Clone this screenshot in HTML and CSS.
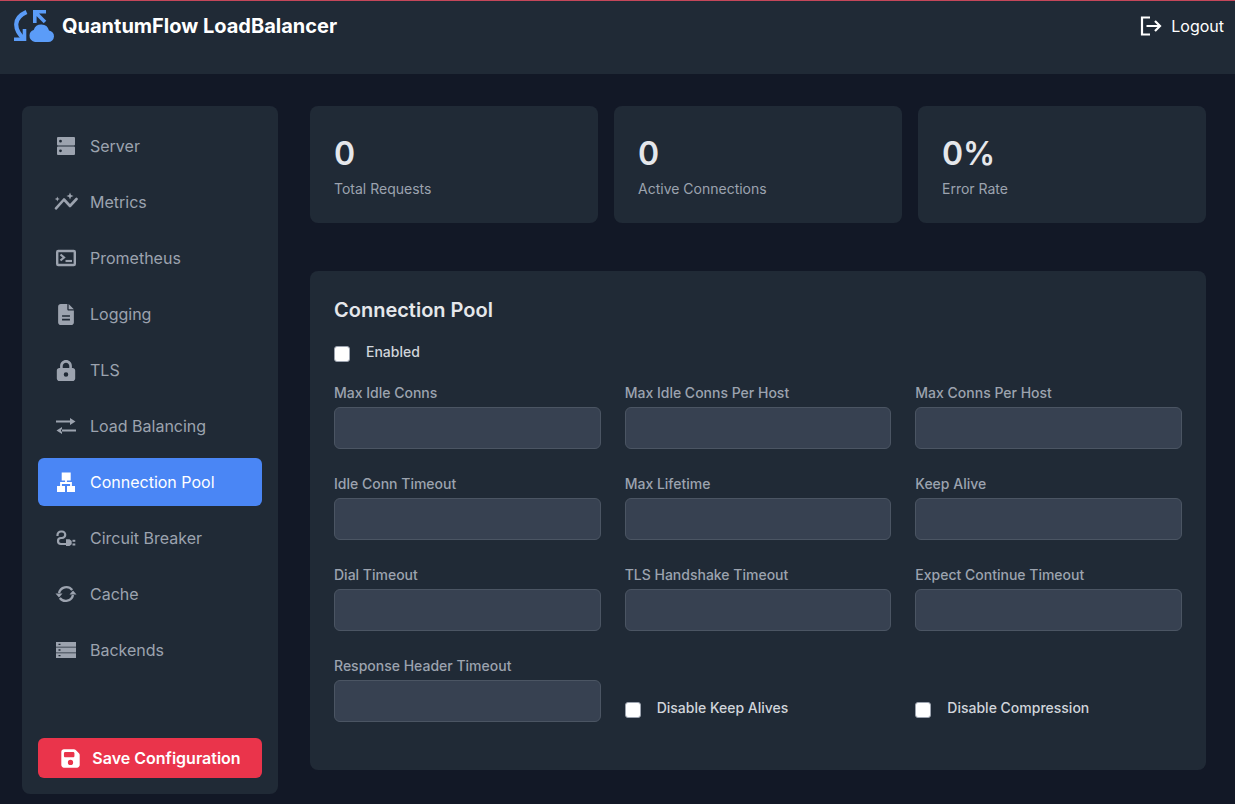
FILE: index.html
```html
<!DOCTYPE html>
<html lang="en">
<head>
    <meta charset="UTF-8">
    <meta name="viewport" content="width=device-width, initial-scale=1.0">
    <title>QuantumFlow LoadBalancer</title>
    <link rel="stylesheet" href="styles.css">
</head>
<body>
    <header class="topbar">
        <div class="brand">
            <svg class="brand-icon" viewBox="0 0 42 34" width="42" height="34">
                <path d="M12.500 3C-1 9 -.5 20 10 30" fill="none" stroke="#5b9cf8" stroke-width="4.200"/>
                <path d="M10.500 20V30.300H0" fill="none" stroke="#5b9cf8" stroke-width="3.600"/>
                <path d="M32 2.800H20.800V14M20.800 2.800L31 13" fill="none" stroke="#5b9cf8" stroke-width="3.600"/>
                <path d="M21 33A6.200 6.200 0 0 1 15.500 26.500A6 6 0 0 1 19.700 21A8 8 0 0 1 35 21.500A5.800 5.800 0 0 1 40 27.500A5.800 5.800 0 0 1 34.200 33Z" fill="#5b9cf8"/>
            </svg>
            <span class="brand-name">QuantumFlow LoadBalancer</span>
        </div>
        <a class="logout" href="#">
            <svg viewBox="0 0 22 20" width="22" height="20" fill="none" stroke="currentColor" stroke-width="2.200">
                <path d="M10 1.500H2V18.500H10"/>
                <path d="M6.500 10H20M15 5L20 10L15 15"/>
            </svg>
            <span>Logout</span>
        </a>
    </header>

    <div class="layout">
        <aside class="sidebar">
            <nav class="nav">
                <a class="nav-item" href="#">
                    <svg class="nav-icon" viewBox="0 0 20 20">
                        <path fill-rule="evenodd" d="M2 1H18A1 1 0 0 1 19 2V8.500A1 1 0 0 1 18 9.500H2A1 1 0 0 1 1 8.500V2A1 1 0 0 1 2 1ZM4.500 3.800A1.400 1.400 0 1 0 4.500 6.600A1.400 1.400 0 1 0 4.500 3.800ZM2 10.500H18A1 1 0 0 1 19 11.500V18A1 1 0 0 1 18 19H2A1 1 0 0 1 1 18V11.500A1 1 0 0 1 2 10.500ZM4.500 13.400A1.400 1.400 0 1 0 4.500 16.200A1.400 1.400 0 1 0 4.500 13.400Z"/>
                    </svg>
                    <span>Server</span>
                </a>
                <a class="nav-item" href="#">
                    <svg class="nav-icon nav-icon-wide" viewBox="0 0 24 20">
                        <path d="M2 16.300L10 7.500L16 14L22.500 7" fill="none" stroke="currentColor" stroke-width="2.600" stroke-linecap="round" stroke-linejoin="round"/>
                        <path d="M16 .5L17 3L19.500 4L17 5L16 7.500L15 5L12.500 4L15 3Z"/>
                        <path d="M3.300 4.500L4 6.300L5.800 7L4 7.700L3.300 9.500L2.600 7.700L.8 7L2.600 6.300Z"/>
                    </svg>
                    <span>Metrics</span>
                </a>
                <a class="nav-item" href="#">
                    <svg class="nav-icon nav-icon-wide" viewBox="0 0 24 20">
                        <rect x="3.200" y="3" width="17.600" height="14" rx="1" fill="none" stroke="currentColor" stroke-width="2.400"/>
                        <path d="M6.500 6.500L10 9.500L6.500 12.500" fill="none" stroke="currentColor" stroke-width="2.200"/>
                        <path d="M11.500 13H18" fill="none" stroke="currentColor" stroke-width="2.200"/>
                    </svg>
                    <span>Prometheus</span>
                </a>
                <a class="nav-item" href="#">
                    <svg class="nav-icon nav-icon-tall" viewBox="0 0 384 512">
                        <path fill-rule="evenodd" d="M64 0C28.700 0 0 28.700 0 64V448c0 35.300 28.700 64 64 64H320c35.300 0 64-28.700 64-64V160H256c-17.700 0-32-14.300-32-32V0H64zM256 0V128H384L256 0zM96 272H288V312H96zM96 360H288V400H96z"/>
                    </svg>
                    <span>Logging</span>
                </a>
                <a class="nav-item" href="#">
                    <svg class="nav-icon nav-icon-tall" viewBox="0 0 448 512">
                        <path fill-rule="evenodd" d="M144 144v48H304V144c0-44.200-35.800-80-80-80s-80 35.800-80 80zM80 192V144C80 64.500 144.500 0 224 0s144 64.500 144 144v48h16c35.300 0 64 28.700 64 64V448c0 35.300-28.700 64-64 64H64c-35.300 0-64-28.700-64-64V256c0-35.300 28.700-64 64-64H80zM224 297a55 55 0 1 0 0 110a55 55 0 1 0 0-110z"/>
                    </svg>
                    <span>TLS</span>
                </a>
                <a class="nav-item" href="#">
                    <svg class="nav-icon nav-icon-wide" viewBox="0 0 24 20">
                        <path d="M2 4.500H17V6.500H2ZM16 2L21.500 5.500L16 9Z"/>
                        <path d="M7 13.500H22V15.500H7ZM8 11L2.500 14.500L8 18Z"/>
                    </svg>
                    <span>Load Balancing</span>
                </a>
                <a class="nav-item active" href="#">
                    <svg class="nav-icon" viewBox="0 0 20 20">
                        <rect x="5.700" y=".5" width="9" height="8"/>
                        <path d="M10 8V12M5 14.500V11H15V14.500" fill="none" stroke="currentColor" stroke-width="1.800"/>
                        <rect x="1" y="14" width="8" height="6"/>
                        <rect x="11" y="14" width="8" height="6"/>
                    </svg>
                    <span>Connection Pool</span>
                </a>
                <a class="nav-item" href="#">
                    <svg class="nav-icon nav-icon-wide" viewBox="0 0 24 20">
                        <path d="M3.500 8V7A3.500 3.500 0 0 1 7 3.500H8A3.200 3.200 0 0 1 8 10H7A3 3 0 0 0 7 16H12" fill="none" stroke="currentColor" stroke-width="2.200"/>
                        <path d="M12 11.300H15.500L17.700 13V16.300L15.500 18H12Z"/>
                        <rect x="18.500" y="11.800" width="2.800" height="2"/>
                        <rect x="18.500" y="15.500" width="2.800" height="2"/>
                    </svg>
                    <span>Circuit Breaker</span>
                </a>
                <a class="nav-item" href="#">
                    <svg class="nav-icon nav-icon-wide" viewBox="0 0 24 20">
                        <path d="M5 9A7.500 7.500 0 0 1 18.200 6" fill="none" stroke="currentColor" stroke-width="2.400"/>
                        <path d="M19 11A7.500 7.500 0 0 1 5.800 14" fill="none" stroke="currentColor" stroke-width="2.400"/>
                        <path d="M1.500 9.500H8.500L5 13.500Z"/>
                        <path d="M22.500 10.500H15.500L19 6.500Z"/>
                    </svg>
                    <span>Cache</span>
                </a>
                <a class="nav-item" href="#">
                    <svg class="nav-icon nav-icon-wide" viewBox="0 0 24 20">
                        <path fill-rule="evenodd" d="M2 2H22V6.800H2ZM4.500 3.700V5.100H6.500V3.700ZM2 7.600H22V12.400H2ZM4.500 9.300V10.700H6.500V9.300ZM2 13.200H22V18H2ZM4.500 14.900V16.300H6.500V14.900Z"/>
                    </svg>
                    <span>Backends</span>
                </a>
            </nav>
            <div class="sidebar-foot">
                <button class="save-btn" type="button">
                    <svg viewBox="0 0 448 512" width="21" height="21" fill="currentColor">
                        <path d="M64 32C28.700 32 0 60.700 0 96V416c0 35.300 28.700 64 64 64H384c35.300 0 64-28.700 64-64V173.300c0-17-6.700-33.300-18.700-45.300L352 50.700C340 38.700 323.700 32 306.700 32H64zm0 96c0-17.700 14.300-32 32-32H288c17.700 0 32 14.300 32 32v64c0 17.700-14.300 32-32 32H96c-17.700 0-32-14.300-32-32V128zM224 288a64 64 0 1 1 0 128 64 64 0 1 1 0-128z"/>
                    </svg>
                    <span>Save Configuration</span>
                </button>
            </div>
        </aside>

        <main class="content">
            <section class="stats">
                <div class="stat-card">
                    <div class="stat-value">0</div>
                    <div class="stat-label">Total Requests</div>
                </div>
                <div class="stat-card">
                    <div class="stat-value">0</div>
                    <div class="stat-label">Active Connections</div>
                </div>
                <div class="stat-card">
                    <div class="stat-value">0%</div>
                    <div class="stat-label">Error Rate</div>
                </div>
            </section>

            <section class="panel">
                <h2>Connection Pool</h2>
                <label class="check check-top">
                    <input type="checkbox">
                    <span>Enabled</span>
                </label>
                <form class="form-grid">
                    <div class="field">
                        <label for="maxIdleConns">Max Idle Conns</label>
                        <input type="text" id="maxIdleConns">
                    </div>
                    <div class="field">
                        <label for="maxIdlePerHost">Max Idle Conns Per Host</label>
                        <input type="text" id="maxIdlePerHost">
                    </div>
                    <div class="field">
                        <label for="maxConnsPerHost">Max Conns Per Host</label>
                        <input type="text" id="maxConnsPerHost">
                    </div>
                    <div class="field">
                        <label for="idleConnTimeout">Idle Conn Timeout</label>
                        <input type="text" id="idleConnTimeout">
                    </div>
                    <div class="field">
                        <label for="maxLifetime">Max Lifetime</label>
                        <input type="text" id="maxLifetime">
                    </div>
                    <div class="field">
                        <label for="keepAlive">Keep Alive</label>
                        <input type="text" id="keepAlive">
                    </div>
                    <div class="field">
                        <label for="dialTimeout">Dial Timeout</label>
                        <input type="text" id="dialTimeout">
                    </div>
                    <div class="field">
                        <label for="tlsTimeout">TLS Handshake Timeout</label>
                        <input type="text" id="tlsTimeout">
                    </div>
                    <div class="field">
                        <label for="expectTimeout">Expect Continue Timeout</label>
                        <input type="text" id="expectTimeout">
                    </div>
                    <div class="field">
                        <label for="responseTimeout">Response Header Timeout</label>
                        <input type="text" id="responseTimeout">
                    </div>
                    <label class="check check-end">
                        <input type="checkbox">
                        <span>Disable Keep Alives</span>
                    </label>
                    <label class="check check-end">
                        <input type="checkbox">
                        <span>Disable Compression</span>
                    </label>
                </form>
            </section>
        </main>
    </div>
</body>
</html>
```

FILE: styles.css
```css
* { box-sizing: border-box; }
html, body { height: 100%; }
body {
    margin: 0;
    font-family: 'Inter', sans-serif;
    background-color: #121826;
    color: #e5e7eb;
    display: flex;
    flex-direction: column;
    overflow: hidden;
}

.topbar {
    height: 74px;
    flex: none;
    display: flex;
    justify-content: space-between;
    align-items: flex-start;
    padding: 8px 11px 0 12px;
    background-color: #202a36;
    border-top: 1px solid #c5475a;
}
.brand { display: flex; align-items: center; gap: 6px; height: 34px; }
.brand-icon { display: block; margin-left: 2px; }
.brand-name { font-size: 20px; font-weight: 700; color: #fff; }
.logout {
    display: flex;
    align-items: center;
    gap: 9px;
    height: 34px;
    font-size: 16px;
    color: #fff;
    text-decoration: none;
}

.layout {
    flex: 1;
    min-height: 0;
    display: flex;
    gap: 32px;
    padding: 32px 29px 10px 22px;
}

.sidebar {
    width: 256px;
    flex: none;
    display: flex;
    flex-direction: column;
    background-color: #202a36;
    border-radius: 8px;
}
.nav { flex: 1; padding: 16px; display: flex; flex-direction: column; gap: 8px; }
.nav-item {
    height: 48px;
    display: flex;
    align-items: center;
    gap: 14px;
    padding-left: 18px;
    border-radius: 6px;
    font-size: 16px;
    color: #9ca3af;
    text-decoration: none;
}
.nav-item.active { background-color: #4a86f5; color: #fff; }
.nav-icon { width: 20px; height: 20px; flex: none; fill: currentColor; }
.nav-icon-wide { width: 24px; margin: 0 -2px; }
.nav-icon-tall { height: 21px; }

.sidebar-foot { padding: 16px; }
.save-btn {
    width: 100%;
    height: 40px;
    display: flex;
    align-items: center;
    justify-content: center;
    gap: 11px;
    padding: 0 0 0 1px;
    border: none;
    border-radius: 6px;
    background-color: #ea344b;
    color: #fff;
    font-family: inherit;
    font-size: 16px;
    font-weight: 600;
}

.content { flex: 1; min-width: 0; }
.stats { display: grid; grid-template-columns: repeat(3, 1fr); gap: 16px; margin-bottom: 48px; }
.stat-card { height: 117px; padding: 24px; background-color: #202a36; border-radius: 8px; }
.stat-value { font-size: 32px; line-height: 48px; font-weight: 600; color: #e5e7eb; }
.stat-label { margin-top: 1px; font-size: 14px; line-height: 20px; color: #9ca3af; }

.panel { padding: 24px; background-color: #202a36; border-radius: 8px; height: 499px; }
.panel h2 { margin: 0 0 17px; font-size: 20px; line-height: 30px; font-weight: 600; color: #e5e7eb; }

.form-grid { display: grid; grid-template-columns: repeat(3, 1fr); column-gap: 24px; row-gap: 24px; }
.field label { display: block; margin-bottom: 3px; font-size: 14px; line-height: 22px; font-weight: 500; color: #9ca3af; }
.field input {
    display: block;
    width: 100%;
    height: 42px;
    background-color: #374151;
    border: 1px solid #4b5563;
    border-radius: 6px;
}

.check { display: flex; align-items: flex-start; gap: 16px; font-size: 14px; line-height: 20px; font-weight: 500; color: #d1d5db; }
.check input {
    appearance: none;
    width: 16px;
    height: 16px;
    margin: 4px 0 0;
    flex: none;
    background-color: #fff;
    border: 1px solid #9ca3af;
    border-radius: 3px;
}
.check-top { margin-bottom: 20px; }
.check-end { align-self: end; padding-bottom: 4px; }
```
